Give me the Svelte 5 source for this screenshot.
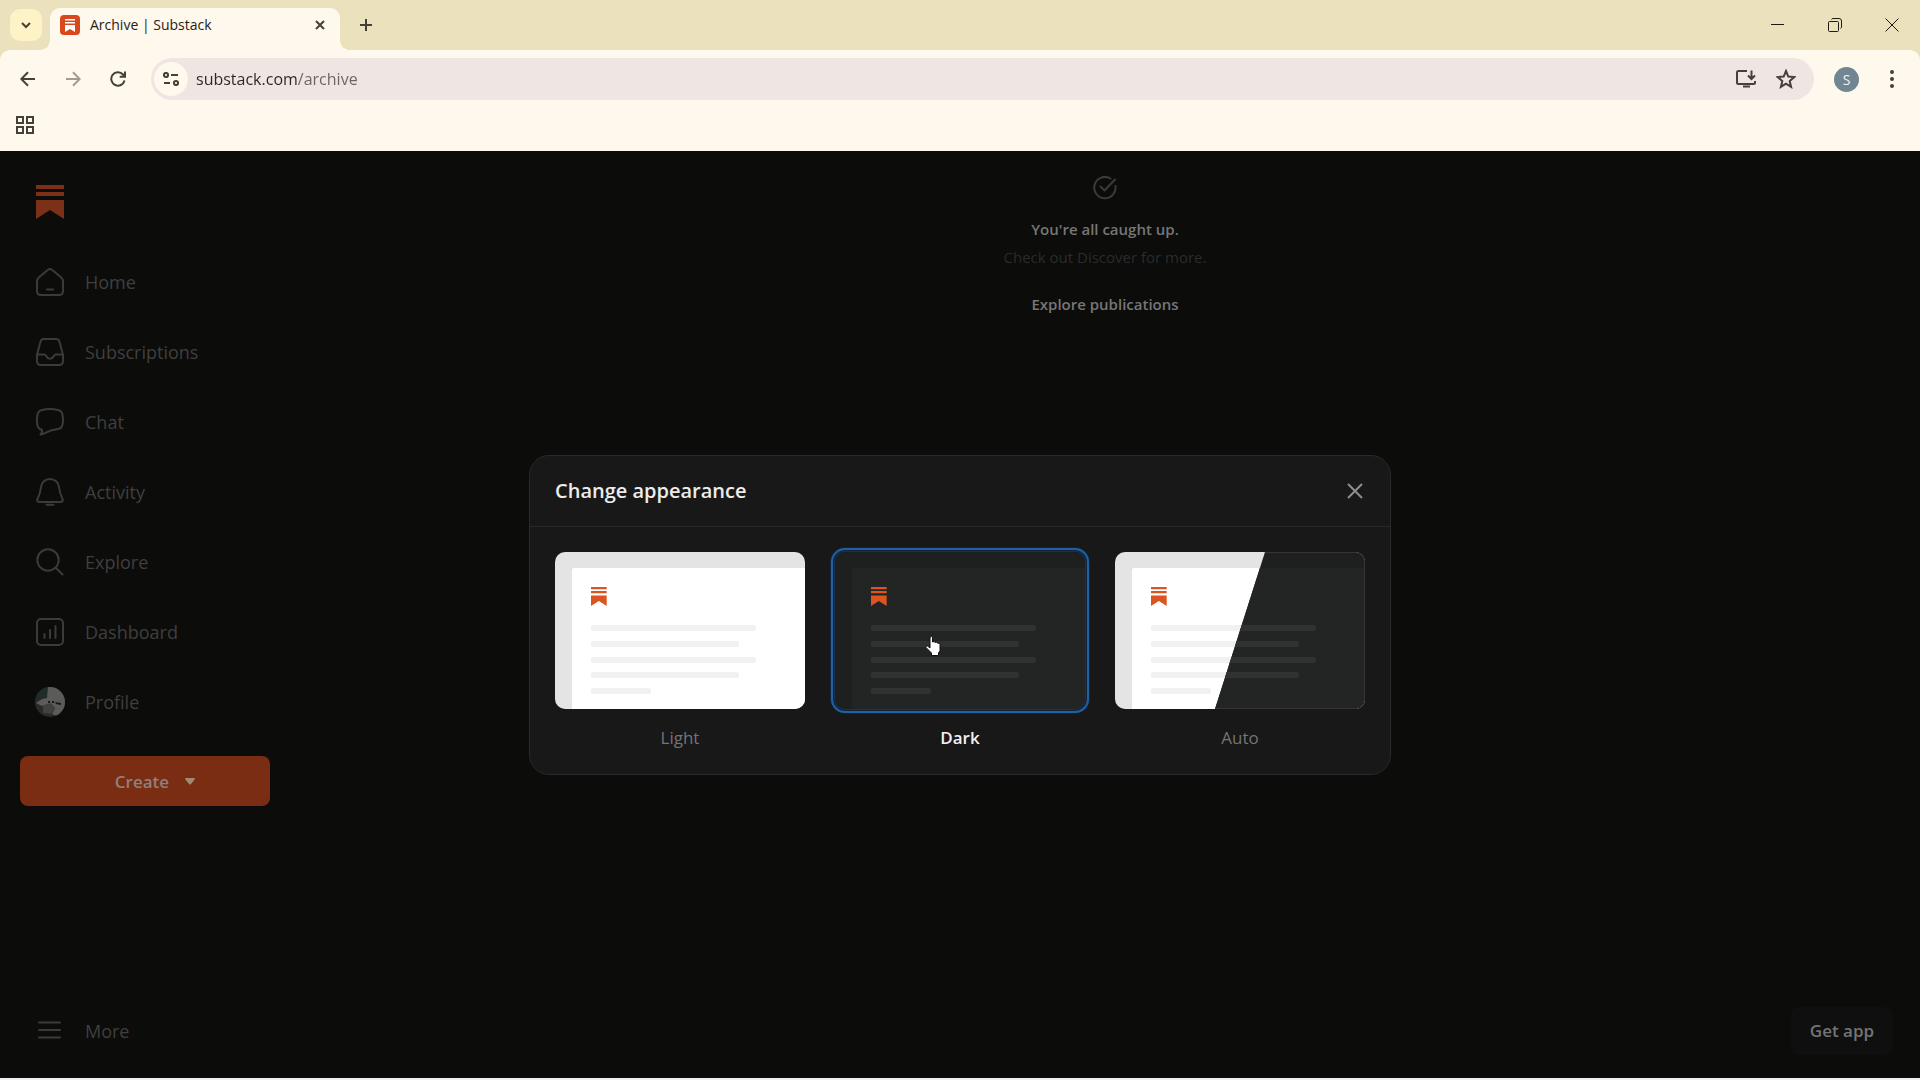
<script lang="ts">
  let selected = $state('dark');
  let isModalOpen = $state(true);
  let address = $state('substack.com/archive');

  const navItems = ['Home', 'Subscriptions', 'Chat', 'Activity', 'Explore', 'Dashboard', 'Profile'];

  const themes = [
    { id: 'light', label: 'Light' },
    { id: 'dark', label: 'Dark' },
    { id: 'auto', label: 'Auto' },
  ];

  const lines = [
    { y: 73, width: 165 },
    { y: 89, width: 148 },
    { y: 105, width: 165 },
    { y: 120, width: 148 },
    { y: 136, width: 60 },
  ];
</script>

{#snippet bookmark()}
  <path d="M0 0h28v4H0zM0 7h28v4H0zM0 15h28v19L14 25 0 34z" />
{/snippet}

{#snippet artwork(mode)}
  <g class={mode}>
    <rect class="frame" width="250" height="157" />
    <rect class="sheet" x="17" y="16" width="240" height="150" rx="2" />
    <g class="mark" transform="translate(36 35) scale(0.56)">{@render bookmark()}</g>
    {#each lines as line}
      <rect class="line" x="36" y={line.y} width={line.width} height="6" rx="2" />
    {/each}
  </g>
{/snippet}

{#snippet navIcon(name)}
  <svg class="nav-icon" viewBox="0 0 28 28" width="28" height="28" aria-hidden="true">
    {#if name === 'Home'}
      <path d="M1 13.5Q1 11 3 9.200L12 1.700Q14 .3 16 1.700L25 9.200Q27 11 27 13.500V23q0 4-4 4H5q-4 0-4-4zM11 21.500h6" />
    {:else if name === 'Subscriptions'}
      <path d="M8 1h12q3 0 3.600 3L27 17v6q0 4-4 4H5q-4 0-4-4v-6L4.400 4Q5 1 8 1zM1 16.500h7.500c1 0 1.500 1 2 2 1.500 3 5.500 3 7 0 .5-1 1-2 2-2H27" />
    {:else if name === 'Chat'}
      <path d="M6 2q8-2 16 0 4 .8 4.500 5 1 5 0 9.500-.7 4-4.500 4.500-7 1-11 3.200-3.500 2-6.500 2.300 2-2.300 1.500-4.500Q2 21 1.400 17q-.9-5 0-10Q2 3 6 2z" />
    {:else if name === 'Activity'}
      <path d="M14 1c-5 0-8.500 3.500-9 8-.5 5-1.500 8-3.500 12-.8 1.800.2 3 2 3h21c1.800 0 2.800-1.200 2-3-2-4-3-7-3.500-12-.5-4.500-4-8-9-8zM10.500 26.800h7" />
    {:else if name === 'Explore'}
      <circle cx="12" cy="12" r="10.700" /><path d="m20 20 6.500 6.500" />
    {:else if name === 'Dashboard'}
      <rect x="1" y="1" width="26" height="26" rx="4" /><path d="M8.500 16v4M14 12v8M19.500 8v12" />
    {:else}
      <path d="M3 5.500h21M3 13h21M3 20.500h21" />
    {/if}
  </svg>
{/snippet}

<div class="window">
  <header class="browser">
    <div class="tab-strip">
      <button class="tab-search" aria-label="Search tabs">
        <svg viewBox="0 0 12 12" width="12" height="12"><path d="m2 4 4 4 4-4" /></svg>
      </button>
      <div class="tab">
        <svg viewBox="0 0 20 20" width="20" height="20">
          <rect width="20" height="20" rx="4" fill="#d9481c" />
          <path d="M5 4h10v1.500H5zM5 7h10v1.500H5zM5 10h10v7l-5-3-5 3z" fill="#fff" />
        </svg>
        <span class="tab-title">Archive | Substack</span>
        <button class="tab-close" aria-label="Close tab">
          <svg viewBox="0 0 12 12" width="12" height="12"><path d="m2 2 8 8m0-8-8 8" /></svg>
        </button>
      </div>
      <button class="new-tab" aria-label="New tab">
        <svg viewBox="0 0 14 14" width="14" height="14"><path d="M7 1v12M1 7h12" /></svg>
      </button>
      <div class="window-controls">
        <button aria-label="Minimize">
          <svg viewBox="0 0 14 14" width="14" height="14"><path d="M0 6.500h13" /></svg>
        </button>
        <button aria-label="Restore">
          <svg viewBox="0 0 14 14" width="14" height="14"><rect x=".5" y="3.500" width="10" height="10" rx="1" /><path d="M3.500 1.500q.4-1 1.500-1h6q2.500 0 2.500 2.500v6q0 1-1 1.500" /></svg>
        </button>
        <button aria-label="Close window">
          <svg viewBox="0 0 14 14" width="14" height="14"><path d="m.5.5 13 13m0-13-13 13" /></svg>
        </button>
      </div>
    </div>

    <div class="toolbar">
      <button class="tool" aria-label="Back">
        <svg viewBox="0 0 16 16" width="16" height="16"><path d="M15 8H1.500M8 1.200 1.300 8 8 14.800" /></svg>
      </button>
      <button class="tool faded" aria-label="Forward">
        <svg viewBox="0 0 16 16" width="16" height="16"><path d="M1 8h13.500M8 1.200 14.700 8 8 14.800" /></svg>
      </button>
      <button class="tool" aria-label="Reload">
        <svg viewBox="0 0 16 16" width="16" height="16"><path d="M14.500 9.500A6.700 6.700 0 1 1 13 3.500l1.500 2M15 .5v5.300H9.700" /></svg>
      </button>
      <div class="omnibox">
        <button class="site-info" aria-label="View site information">
          <svg viewBox="0 0 16 14" width="16" height="14"><circle cx="3" cy="3" r="2.100" /><path d="M8 3h7M1 11h6" /><circle cx="13" cy="11" r="2.100" /></svg>
        </button>
        <input class="address" aria-label="Address" bind:value={address} spellcheck="false" />
        <button class="omni-action" aria-label="Install Substack">
          <svg viewBox="0 0 20 18" width="20" height="18"><path d="M11 1H2.500Q1 1 1 2.500v10Q1 14 2.500 14h15q1.500 0 1.500-1.500V11M15.500.5v8M12 5.500 15.500 9 19 5.500M7 16.500h7" /></svg>
        </button>
        <button class="omni-action" aria-label="Bookmark this tab">
          <svg viewBox="0 0 20 20" width="20" height="20"><path d="m10 2 2.300 5.600 6 .5-4.600 3.900 1.400 5.900-5.100-3.200-5.100 3.200L6.300 12 1.700 8.100l6-.5z" /></svg>
        </button>
      </div>
      <button class="tool" aria-label="Profile"><span class="initial">S</span></button>
      <button class="tool" aria-label="Menu">
        <svg class="dots" viewBox="0 0 4 18" width="4" height="18"><circle cx="2" cy="2" r="2" /><circle cx="2" cy="9" r="2" /><circle cx="2" cy="16" r="2" /></svg>
      </button>
    </div>

    <div class="bookmarks">
      <button aria-label="Apps">
        <svg viewBox="0 0 18 18" width="18" height="18"><path d="M1 1h6v6H1zM11 1h6v6h-6zM1 11h6v6H1zM11 11h6v6h-6z" /></svg>
      </button>
    </div>
  </header>

  <div class="page">
    <aside class="sidebar">
      <a class="logo" href="#home" aria-label="Substack">
        <svg viewBox="0 0 28 34" width="28" height="34">{@render bookmark()}</svg>
      </a>
      <nav>
        {#each navItems as item}
          <a class="nav-link" href="#{item.toLowerCase()}">
            {#if item === 'Profile'}
              <svg class="avatar" viewBox="0 0 30 30" width="30" height="30" aria-hidden="true">
                <clipPath id="round"><circle cx="15" cy="15" r="15" /></clipPath>
                <g clip-path="url(#round)">
                  <rect width="30" height="30" fill="#292a29" />
                  <path d="M0 0h14v10L5 13H0z" fill="#202c29" />
                  <path d="M13 0h17v25l-6 5-7-3 3-6-7-4-6 2-6-3 6-4 5-1z" fill="#5b5b59" />
                  <path d="M8 19l8-3 4 5-4 6-8-1z" fill="#41413f" />
                  <path d="M13 14h2v2h-2zM17 14h2v2h-2zM20 15l6 1v2l-5-1z" fill="#171817" />
                </g>
              </svg>
            {:else}
              {@render navIcon(item)}
            {/if}
            <span>{item}</span>
          </a>
        {/each}
      </nav>
      <button class="create">
        Create
        <svg viewBox="0 0 10 7" width="10" height="7"><path d="M0 1q0-1 1-1h8q1 0 1 1L6 6q-1 1-2 0z" /></svg>
      </button>
      <button class="nav-link more">
        {@render navIcon('More')}
        <span>More</span>
      </button>
    </aside>

    <main>
      <svg class="check" viewBox="0 0 24 24" width="24" height="24" aria-hidden="true"><path d="M22.500 10a10.700 10.700 0 1 1-5-7.500M7.500 10.500l4 4L22 3.500" /></svg>
      <h1>You're all caught up.</h1>
      <p>Check out Discover for more.</p>
      <a class="explore" href="#explore">Explore publications</a>
      <button class="get-app">Get app</button>
    </main>

    {#if isModalOpen}
      <div class="overlay">
        <div class="modal" role="dialog" aria-modal="true" aria-labelledby="modal-title">
          <div class="modal-header">
            <h2 id="modal-title">Change appearance</h2>
            <button class="modal-close" aria-label="Close" onclick={() => isModalOpen = false}>
              <svg viewBox="0 0 16 16" width="16" height="16"><path d="m1 1 14 14m0-14L1 15" /></svg>
            </button>
          </div>
          <div class="themes">
            {#each themes as theme}
              <label class="theme" class:selected={selected === theme.id}>
                <input type="radio" name="theme" value={theme.id} bind:group={selected} />
                <svg class="preview" viewBox="0 0 250 157" aria-hidden="true">
                  {#if theme.id === 'auto'}
                    <clipPath id="split"><path d="M150 0h100v157H100z" /></clipPath>
                    {@render artwork('light')}
                    <g clip-path="url(#split)">
                      {@render artwork('dark')}
                      <rect class="edge" x=".5" y=".5" width="249" height="156" rx="9" />
                    </g>
                  {:else}
                    {@render artwork(theme.id)}
                  {/if}
                </svg>
                <span>{theme.label}</span>
                {#if theme.id === 'dark'}
                  <svg class="pointer" viewBox="0 0 16 20" width="16" height="20" aria-hidden="true">
                    <path d="M5 1.500Q6.500-.5 7.500 1.500V6l1.500-.5 1 1 1.500-.5 1 1.200 1.500-.2 1 1.500v6L13.500 17v2.500H6.500V17L1 11.500q-.5-2 1.500-1.500L5 12z" />
                  </svg>
                {/if}
              </label>
            {/each}
          </div>
        </div>
      </div>
    {/if}
  </div>
</div>

<style>
  :global(body) {
    margin: 0;
    background: #f1f1f0;
  }

  .window {
    display: flex;
    flex-direction: column;
    box-sizing: border-box;
    min-height: 100vh;
    padding-bottom: 2px;
    font-family: "Open Sans", "Noto Sans", sans-serif;
    font-size: 18px;
  }

  button {
    display: flex;
    align-items: center;
    justify-content: center;
    padding: 0;
    border: none;
    background: none;
    color: inherit;
    font: inherit;
    cursor: pointer;
  }

  a {
    color: inherit;
    text-decoration: none;
  }

  svg {
    flex: none;
  }

  .browser {
    background: #ebe2bd;
    color: #252219;
  }

  .browser button svg {
    fill: none;
    stroke: #45403a;
    stroke-width: 2;
  }

  .tab-strip {
    display: flex;
    align-items: flex-start;
    height: 50px;
  }

  .tab-search {
    width: 32px;
    height: 32px;
    margin: 9px 8px 0 10px;
    border-radius: 10px;
    background: #fdf3c7;
  }

  .tab {
    position: relative;
    display: flex;
    align-items: center;
    gap: 10px;
    box-sizing: border-box;
    width: 290px;
    height: 42px;
    margin-top: 8px;
    padding: 0 8px 8px 10px;
    border-radius: 10px 10px 0 0;
    background: #fff8ec;
  }

  /* curved feet where the tab joins the toolbar */
  .tab::before,
  .tab::after {
    content: "";
    position: absolute;
    bottom: 0;
    width: 10px;
    height: 10px;
  }

  .tab::before {
    right: 100%;
    background: radial-gradient(circle at 0 0, transparent 10px, #fff8ec 10px);
  }

  .tab::after {
    left: 100%;
    background: radial-gradient(circle at 100% 0, transparent 10px, #fff8ec 10px);
  }

  .tab-title {
    flex: 1;
    font-size: 14px;
    line-height: 20px;
  }

  .tab-close,
  .new-tab {
    width: 24px;
    height: 24px;
  }

  .new-tab {
    margin: 13px 0 0 14px;
  }

  .window-controls {
    display: flex;
    margin-left: auto;
  }

  .window-controls button {
    width: 57px;
    height: 49px;
  }

  .window-controls button svg {
    stroke: #1c1a12;
    stroke-width: 1;
  }

  .toolbar {
    display: flex;
    align-items: center;
    height: 58px;
    padding: 0 6px 0 5px;
    border-radius: 10px 10px 0 0;
    background: #fff8ec;
  }

  .tool {
    width: 45px;
    height: 40px;
  }

  .faded {
    opacity: 0.5;
  }

  .browser .dots {
    fill: #45403a;
    stroke: none;
  }

  .initial {
    width: 25px;
    border-radius: 50%;
    background: #718692;
    color: #e9f1f5;
    font-size: 14px;
    line-height: 25px;
    text-align: center;
  }

  .omnibox {
    display: flex;
    flex: 1;
    align-items: center;
    gap: 8px;
    box-sizing: border-box;
    height: 42px;
    margin: 0 10px 0 11px;
    padding: 0 12px 0 3px;
    border-radius: 21px;
    background: #efe5e3;
  }

  .site-info {
    width: 34px;
    height: 34px;
    border-radius: 50%;
    background: #fff8ec;
  }

  /* the host is dark, the path after it is dimmed */
  .address {
    flex: 1;
    min-width: 0;
    height: 34px;
    padding: 0;
    border: none;
    outline: none;
    background: linear-gradient(to right, #2b2724 101px, #6b6461 101px);
    background-clip: text;
    color: transparent;
    font: inherit;
    font-size: 16px;
  }

  .omni-action {
    width: 32px;
    height: 32px;
  }

  .bookmarks {
    display: flex;
    height: 43px;
    padding-left: 16px;
    background: #fff8ec;
  }

  .bookmarks button {
    width: 18px;
    height: 34px;
  }

  .page {
    position: relative;
    display: flex;
    flex: 1;
    background: #0c0c0b;
    color: #403f3e;
  }

  .sidebar {
    display: flex;
    flex-direction: column;
    box-sizing: border-box;
    width: 290px;
    padding: 34px 0 12px;
  }

  .logo {
    height: 62px;
    padding-left: 36px;
  }

  .logo svg {
    fill: #7b3118;
  }

  .nav-link {
    display: flex;
    align-items: center;
    justify-content: flex-start;
    gap: 21px;
    height: 70px;
    padding-left: 36px;
    line-height: 24px;
  }

  .nav-icon,
  .check {
    fill: none;
    stroke: #3b3b3a;
    stroke-width: 2;
    stroke-linecap: round;
    stroke-linejoin: round;
  }

  .avatar {
    margin: 0 -1px;
  }

  .create {
    gap: 16px;
    box-sizing: border-box;
    width: 250px;
    height: 50px;
    margin: 19px 20px 0;
    padding-left: 20px;
    border-radius: 8px;
    background: #7b2d14;
    color: #8f817b;
    font-size: 17px;
    font-weight: 600;
  }

  .create svg {
    fill: #a08a75;
  }

  .more {
    margin-top: auto;
  }

  main {
    display: flex;
    flex: 1;
    flex-direction: column;
    align-items: center;
    padding-top: 25px;
    font-size: 15px;
    line-height: 24px;
  }

  h1,
  h2,
  p {
    margin: 0;
  }

  h1,
  .explore {
    color: #777675;
    font-size: 15px;
    font-weight: 600;
  }

  h1 {
    margin-top: 17px;
  }

  p {
    margin-top: 4px;
    color: #2b2b2b;
  }

  .explore {
    margin-top: 23px;
  }

  .get-app {
    width: 102px;
    height: 48px;
    margin: auto 27px 23px auto;
    border-radius: 8px;
    background: #0f0f0f;
    color: #747473;
    font-size: 17px;
    font-weight: 600;
  }

  .overlay {
    position: absolute;
    inset: 0;
    display: flex;
    align-items: center;
    justify-content: center;
  }

  .modal {
    box-sizing: border-box;
    width: 862px;
    border: 1px solid #292929;
    border-radius: 20px;
    background: #181818;
  }

  .modal-header {
    display: flex;
    align-items: center;
    justify-content: space-between;
    height: 70px;
    padding: 0 25px;
    border-bottom: 1px solid #292929;
  }

  h2 {
    color: #ececec;
    font-size: 20px;
    font-weight: 600;
    line-height: 28px;
  }

  .modal-close {
    width: 20px;
    height: 32px;
  }

  .modal-close svg {
    fill: none;
    stroke: #8f8d8d;
    stroke-width: 2;
  }

  .themes {
    display: grid;
    grid-template-columns: repeat(3, 1fr);
    gap: 30px;
    padding: 25px 25px 23px;
  }

  .theme {
    position: relative;
    display: flex;
    flex-direction: column;
    gap: 16px;
    color: #747474;
    font-size: 17px;
    line-height: 26px;
    text-align: center;
    cursor: pointer;
  }

  .theme input {
    position: absolute;
    opacity: 0;
  }

  .selected {
    color: #f1f1f1;
    font-weight: 600;
  }

  .preview {
    width: 100%;
    border-radius: 10px;
  }

  .selected .preview {
    outline: 2px solid #22609f;
    outline-offset: 2px;
    box-shadow: 0 0 0 1px #18334e, 0 0 0 5px #102440;
  }

  .light .frame {
    fill: #e5e4e4;
  }

  .light .sheet {
    fill: #fff;
  }

  .light .line {
    fill: #f2f1f1;
  }

  .dark .frame {
    fill: #1e1f1f;
  }

  .dark .sheet {
    fill: #232424;
  }

  .dark .line {
    fill: #303131;
  }

  .mark {
    fill: #dc5420;
  }

  .edge {
    fill: none;
    stroke: #343535;
  }

  .pointer {
    position: absolute;
    top: 84px;
    left: 90px;
    fill: #fff;
    stroke: #111;
    stroke-width: 1;
  }
</style>
